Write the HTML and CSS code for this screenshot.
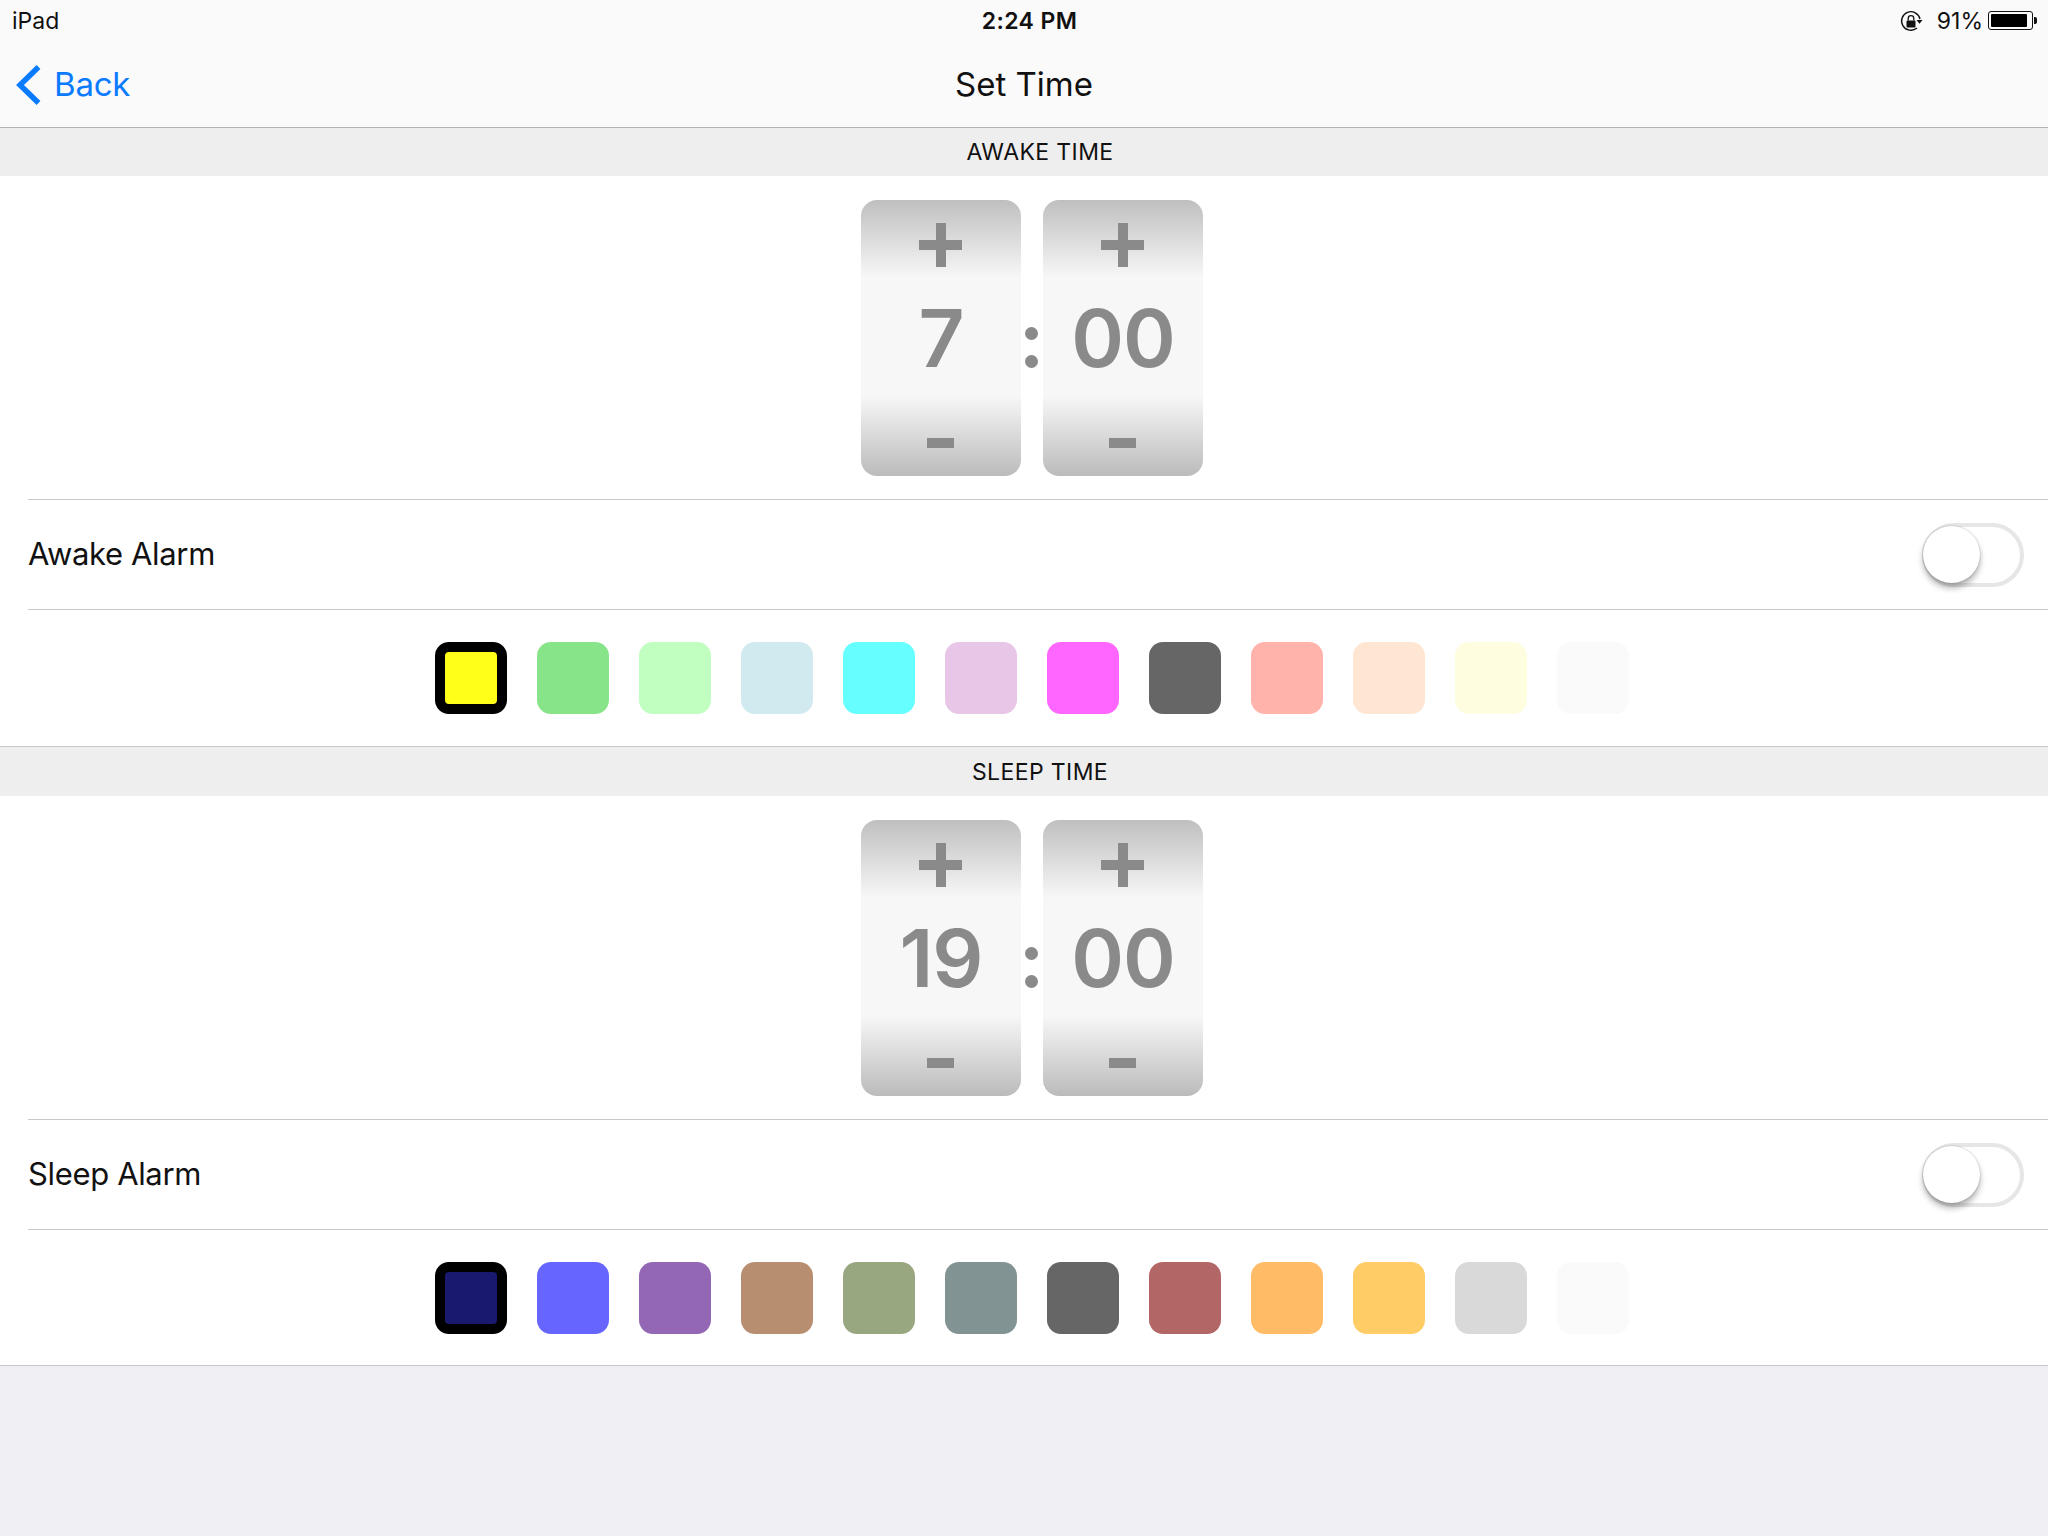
FILE: index.html
```html
<!DOCTYPE html>
<html lang="en">
<head>
    <meta charset="UTF-8">
    <title>Set Time</title>
    <link rel="stylesheet" href="styles.css">
</head>
<body>
    <div class="top-bar">
        <div class="status-bar">
            <span class="status-left">iPad</span>
            <span class="status-time">2:24 PM</span>
            <span class="status-right">
                <svg class="lock-icon" width="26" height="24" viewBox="0 0 26 24">
                    <path d="M22 10A9.3 9.3 0 1 0 19 19" fill="none" stroke="#111" stroke-width="1.4"/>
                    <path d="M18.5 11h6l-3 3.8z" fill="#111"/>
                    <rect x="8.5" y="11.5" width="9" height="7" rx="1" fill="#111"/>
                    <path d="M10.2 11.5V9.5a2.8 2.8 0 0 1 5.6 0v2" fill="none" stroke="#111" stroke-width="1.3"/>
                </svg>
                <span>91%</span>
                <span class="battery"><span class="battery-level"></span></span>
                <span class="battery-tip"></span>
            </span>
        </div>
        <div class="nav-bar">
            <a class="back-link">
                <svg width="28" height="44" viewBox="0 0 28 44">
                    <path d="M25.5 5 7 23l18.5 18" fill="none" stroke="#0a7aff" stroke-width="5.5"/>
                </svg>
                <span>Back</span>
            </a>
            <span class="nav-title">Set Time</span>
        </div>
    </div>

    <section class="time-section">
        <h2 class="section-header">AWAKE TIME</h2>
        <div class="picker">
            <div class="stepper">
                <span class="step-plus"></span>
                <span class="step-value">7</span>
                <span class="step-minus"></span>
            </div>
            <span class="picker-colon"><i></i><i></i></span>
            <div class="stepper">
                <span class="step-plus"></span>
                <span class="step-value">00</span>
                <span class="step-minus"></span>
            </div>
        </div>
        <div class="alarm-row">
            <span class="alarm-label">Awake Alarm</span>
            <span class="toggle"><span class="toggle-knob"></span></span>
        </div>
        <div class="swatches">
            <span class="swatch selected" style="background-color: #ffff19"></span>
            <span class="swatch" style="background-color: #88e488"></span>
            <span class="swatch" style="background-color: #c0ffc0"></span>
            <span class="swatch" style="background-color: #d0eaf0"></span>
            <span class="swatch" style="background-color: #66ffff"></span>
            <span class="swatch" style="background-color: #e8c6e8"></span>
            <span class="swatch" style="background-color: #ff66ff"></span>
            <span class="swatch" style="background-color: #666666"></span>
            <span class="swatch" style="background-color: #ffb3ab"></span>
            <span class="swatch" style="background-color: #ffe6d3"></span>
            <span class="swatch" style="background-color: #fffde0"></span>
            <span class="swatch" style="background-color: #fafafa"></span>
        </div>
    </section>

    <section class="time-section">
        <h2 class="section-header">SLEEP TIME</h2>
        <div class="picker">
            <div class="stepper">
                <span class="step-plus"></span>
                <span class="step-value">19</span>
                <span class="step-minus"></span>
            </div>
            <span class="picker-colon"><i></i><i></i></span>
            <div class="stepper">
                <span class="step-plus"></span>
                <span class="step-value">00</span>
                <span class="step-minus"></span>
            </div>
        </div>
        <div class="alarm-row">
            <span class="alarm-label">Sleep Alarm</span>
            <span class="toggle"><span class="toggle-knob"></span></span>
        </div>
        <div class="swatches">
            <span class="swatch selected" style="background-color: #191970"></span>
            <span class="swatch" style="background-color: #6666ff"></span>
            <span class="swatch" style="background-color: #9467b4"></span>
            <span class="swatch" style="background-color: #b88e70"></span>
            <span class="swatch" style="background-color: #99a781"></span>
            <span class="swatch" style="background-color: #819393"></span>
            <span class="swatch" style="background-color: #666666"></span>
            <span class="swatch" style="background-color: #b36666"></span>
            <span class="swatch" style="background-color: #ffbb66"></span>
            <span class="swatch" style="background-color: #ffcc66"></span>
            <span class="swatch" style="background-color: #d9d9d9"></span>
            <span class="swatch" style="background-color: #fafafa"></span>
        </div>
    </section>
</body>
</html>
```

FILE: styles.css
```css
html, body {
    height: 100%;
}
body {
    font-family: Inter, "Liberation Sans", sans-serif;
    background-color: #efeff4;
    color: #111;
    margin: 0;
    padding: 0;
}
.top-bar {
    height: 127px;
    background-color: #fafafa;
    border-bottom: 1px solid #b2b2b2;
}
.status-bar {
    display: grid;
    grid-template-columns: 1fr auto 1fr;
    align-items: center;
    height: 41px;
    padding: 0 11px 0 12px;
    font-size: 23px;
}
.status-time {
    position: relative;
    left: 5px;
    font-weight: 600;
    letter-spacing: 0.4px;
}
.status-right {
    display: flex;
    justify-content: flex-end;
    align-items: center;
    gap: 6px;
}
.lock-icon {
    margin-right: 7px;
}
.battery {
    display: block;
    width: 45px;
    height: 19px;
    margin-left: -1px;
    padding: 2px;
    box-sizing: border-box;
    border: 1px solid #111;
    border-radius: 3px;
}
.battery-level {
    display: block;
    width: 92%;
    height: 100%;
    background-color: #000;
    border-radius: 1px;
}
.battery-tip {
    width: 3px;
    height: 7px;
    margin-left: -5px;
    background-color: #111;
    border-radius: 0 2px 2px 0;
}
.nav-bar {
    position: relative;
    display: flex;
    justify-content: center;
    align-items: center;
    height: 86px;
}
.nav-title {
    font-size: 33px;
}
.back-link {
    position: absolute;
    left: 13px;
    top: 21px;
    display: flex;
    align-items: center;
    gap: 13px;
    color: #0a7aff;
    font-size: 33px;
    letter-spacing: -0.2px;
}
.time-section {
    height: 618px;
    background-color: #fff;
    border-bottom: 1px solid #c8c7cc;
}
.section-header {
    margin: 0;
    height: 48px;
    line-height: 48px;
    padding-left: 32px;
    text-align: center;
    font-size: 23px;
    font-weight: 400;
    letter-spacing: 0.4px;
    background-color: #eee;
}
.time-section + .time-section .section-header {
    height: 49px;
    line-height: 50px;
}
.picker {
    display: flex;
    justify-content: center;
    align-items: center;
    height: 276px;
    margin-top: 24px;
    padding-left: 16px;
}
.stepper {
    position: relative;
    display: flex;
    flex-direction: column;
    align-items: center;
    justify-content: center;
    width: 160px;
    height: 276px;
    border-radius: 16px;
    background: linear-gradient(to bottom, #bfbfbf 0, #f7f7f7 28%, #f7f7f7 71%, #bbb 100%);
}
.step-value {
    margin-bottom: 2px;
    font-size: 80px;
    font-weight: 600;
    letter-spacing: -1px;
    color: #8a8a8a;
}
.step-plus {
    position: absolute;
    left: 58px;
    top: 23px;
    width: 43px;
    height: 44px;
    background: linear-gradient(#8a8a8a, #8a8a8a) center / 43px 10px no-repeat,
                linear-gradient(#8a8a8a, #8a8a8a) center / 10px 44px no-repeat;
}
.step-minus {
    position: absolute;
    left: 66px;
    bottom: 28px;
    width: 27px;
    height: 10px;
    background-color: #8a8a8a;
}
.picker-colon {
    display: flex;
    flex-direction: column;
    align-items: center;
    gap: 15px;
    width: 22px;
    margin-top: 18px;
}
.picker-colon i {
    display: block;
    width: 13px;
    height: 13px;
    margin-right: 1px;
    border-radius: 50%;
    background-color: #8a8a8a;
}
.alarm-row {
    display: flex;
    justify-content: space-between;
    align-items: center;
    height: 109px;
    margin: 23px 0 0 28px;
    padding-right: 24px;
    border-top: 1px solid #c8c7cc;
    border-bottom: 1px solid #c8c7cc;
    font-size: 31px;
    letter-spacing: -0.35px;
}
.alarm-label {
    margin-bottom: 2px;
}
.toggle {
    position: relative;
    display: block;
    width: 102px;
    height: 64px;
    box-sizing: border-box;
    border: 4px solid #e6e6e6;
    border-radius: 32px;
    background-color: #fff;
}
.toggle-knob {
    position: absolute;
    left: -3px;
    top: -1px;
    width: 57px;
    height: 57px;
    border-radius: 50%;
    background-color: #fff;
    box-shadow: 0 5px 6px rgba(0, 0, 0, 0.3), 0 0 2px rgba(0, 0, 0, 0.25);
}
.swatches {
    display: flex;
    justify-content: center;
    gap: 30px;
    margin-top: 32px;
    padding-left: 16px;
}
.swatch {
    display: block;
    width: 72px;
    height: 72px;
    box-sizing: border-box;
    border-radius: 14px;
}
.swatch.selected {
    border: 10px solid #000;
}
```
